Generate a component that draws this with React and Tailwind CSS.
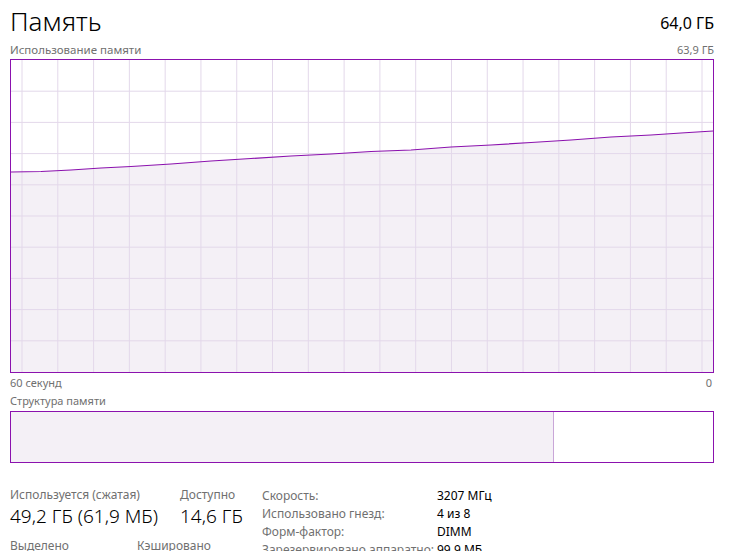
import React from 'react';

const font = { fontFamily: '"Noto Sans", "Open Sans", sans-serif' };

// points of the usage line, in graph-inner coordinates (702 x 312)
const linePoints = [
  [0, 112], [30, 111.5], [60, 110], [90, 108], [120, 106.5], [160, 104],
  [200, 101], [240, 98.5], [280, 96], [320, 94], [360, 91.5], [400, 90],
  [440, 87], [480, 85], [520, 82.5], [560, 80], [600, 77], [640, 75],
  [670, 73], [702, 71],
];

const UsageGraph = () => {
  const cols = Array.from({ length: 20 }, (_, i) => 11 + i * 35.79);
  const rows = Array.from({ length: 9 }, (_, i) => (i + 1) * 31.2);
  const line = linePoints.map(([x, y]) => `${x},${y}`).join(' ');
  const area = `0,312 ${line} 702,312`;

  return (
    <div className="h-[314px] w-[704px] border border-[#8b12ae] bg-white">
      <svg width="702" height="312" viewBox="0 0 702 312" className="block">
        <polygon points={area} fill="#f4f0f6" />
        {cols.map((x) => (
          <line key={`c${x}`} x1={x} y1="0" x2={x} y2="312" stroke="#e3d8ea" strokeWidth="1" />
        ))}
        {rows.map((y) => (
          <line key={`r${y}`} x1="0" y1={y} x2="702" y2={y} stroke="#e3d8ea" strokeWidth="1" />
        ))}
        <polyline points={line} fill="none" stroke="#8b12ae" strokeWidth="1.2" />
      </svg>
    </div>
  );
};

const StructureBar = () => (
  <div className="flex h-[52px] w-[704px] border border-[#8b12ae] bg-white">
    <div className="w-[543px] bg-[#f4f0f6] border-r border-[#c9a6d8]" />
    <div className="flex-1" />
  </div>
);

const Stat = ({ label, value, className = '' }) => (
  <div className={`flex flex-col ${className}`}>
    <span className="text-[12px] leading-[16px] text-[#707070]">{label}</span>
    <span className="text-[19px] font-light leading-[26px] text-black">{value}</span>
  </div>
);

const specs = [
  ['Скорость:', '3207 МГц'],
  ['Использовано гнезд:', '4 из 8'],
  ['Форм-фактор:', 'DIMM'],
  ['Зарезервировано аппаратно:', '99,9 МБ'],
];

const App = () => {
  return (
    <div className="h-[551px] w-[733px] overflow-hidden bg-white pl-[10px]" style={font}>
      {/* Header */}
      <div className="flex w-[704px] items-end justify-between h-[39px]">
        <span className="text-[26px] font-light leading-[35px] text-black">Память</span>
        <span className="text-[16px] leading-[24px] text-black pb-[4px]">64,0 ГБ</span>
      </div>
      <div className="flex w-[704px] justify-between h-[20px] text-[11px] leading-[21px] text-[#707070]">
        <span className="text-[11.5px]">Использование памяти</span>
        <span>63,9 ГБ</span>
      </div>

      {/* Graph */}
      <UsageGraph />
      <div className="flex w-[704px] justify-between pr-[2px] h-[18px] text-[11px] leading-[19px] text-[#707070]">
        <span>60 секунд</span>
        <span>0</span>
      </div>
      <div className="h-[20px] text-[11px] leading-[19px] text-[#707070]">Структура памяти</div>
      <StructureBar />

      {/* Details */}
      <div className="flex mt-[24px]">
        <div className="w-[252px] flex flex-col">
          <div className="flex">
            <Stat className="w-[170px]" label="Используется (сжатая)" value="49,2 ГБ (61,9 МБ)" />
            <Stat label="Доступно" value="14,6 ГБ" />
          </div>
          <div className="flex mt-[9px]">
            <span className="w-[127px] text-[12px] leading-[16px] text-[#707070]">Выделено</span>
            <span className="text-[12px] leading-[16px] text-[#707070]">Кэшировано</span>
          </div>
        </div>
        <div className="flex flex-col">
          {specs.map(([k, v]) => (
            <div key={k} className="flex h-[18px] items-center">
              <span className="w-[175px] text-[12px] text-[#707070]">{k}</span>
              <span className="text-[12px] text-black">{v}</span>
            </div>
          ))}
        </div>
      </div>
    </div>
  );
};

export default App;
